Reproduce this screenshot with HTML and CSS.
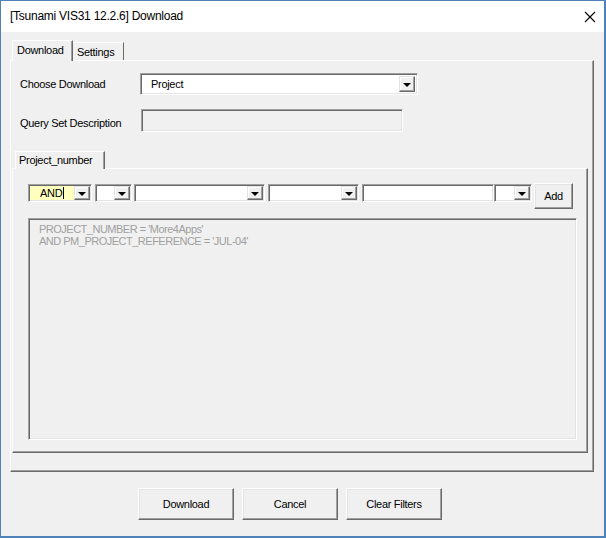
FILE: index.html
```html
<!DOCTYPE html>
<html>
<head>
<meta charset="utf-8">
<link rel="stylesheet" href="styles.css">
</head>
<body>
<div class="window">
  <div class="titlebar">
    <span class="title">[Tsunami VIS31 12.2.6] Download</span>
    <svg class="close" width="12" height="12" viewBox="0 0 12 12"><path d="M1 1 L11 11 M11 1 L1 11" stroke="#000" stroke-width="1.1" fill="none"/></svg>
  </div>
  <div class="client">
    <div class="tabs">
      <div class="tab active">Download</div>
      <div class="tab">Settings</div>
    </div>
    <div class="page">
      <div class="field-row first">
        <span class="label">Choose Download</span>
        <div class="combo choose"><span class="val">Project</span><span class="dd"><i></i></span></div>
      </div>
      <div class="field-row second">
        <span class="label low">Query Set Description</span>
        <div class="edit desc"></div>
      </div>
      <div class="subtabs">
        <div class="subtab">Project_number</div>
      </div>
      <div class="subpage">
        <div class="filter-row">
          <div class="combo c1 yellow"><span class="val">AND<b class="caret"></b></span><span class="dd"><i></i></span></div>
          <div class="combo c2"><span class="val"></span><span class="dd"><i></i></span></div>
          <div class="combo c3"><span class="val"></span><span class="dd"><i></i></span></div>
          <div class="combo c4"><span class="val"></span><span class="dd"><i></i></span></div>
          <div class="edit c5"></div>
          <div class="combo c6"><span class="val"></span><span class="dd"><i></i></span></div>
          <div class="btn add">Add</div>
        </div>
        <div class="memo">
          <div>PROJECT_NUMBER = 'More4Apps'</div>
          <div>AND PM_PROJECT_REFERENCE = 'JUL-04'</div>
        </div>
      </div>
    </div>
    <div class="buttons">
      <div class="btn big">Download</div>
      <div class="btn big">Cancel</div>
      <div class="btn big">Clear Filters</div>
    </div>
  </div>
</div>
</body>
</html>
```
FILE: styles.css
```css
* { box-sizing: border-box; }
html, body { margin: 0; padding: 0; }
body {
  width: 606px;
  height: 538px;
  overflow: hidden;
  font-family: "Liberation Sans", Arial, sans-serif;
  font-size: 11px;
  letter-spacing: -0.3px;
  color: #000;
}
.window {
  width: 606px;
  height: 538px;
  border-left: 1px solid #4f82b8;
  border-top: 1px solid #4f82b8;
  border-right: 2px solid #4f82b8;
  border-bottom: 2px solid #4f82b8;
  display: flex;
  flex-direction: column;
  background: #f0f0f0;
}
.titlebar {
  height: 31px;
  background: #fff;
  display: flex;
  align-items: center;
  justify-content: space-between;
  padding: 0 8px 1px 9px;
}
.title {
  font-size: 12px;
  letter-spacing: -0.25px;
}
.close { display: block; margin-top: 1px; }
.client {
  flex: 1;
  padding: 0 10px 0 9px;
  background: #f0f0f0;
}
.tabs {
  display: flex;
  align-items: flex-end;
  margin-top: 8px;
  margin-left: 2px;
  height: 21px;
  margin-bottom: -1px;
  position: relative;
  z-index: 1;
}
.tab {
  height: 18px;
  margin-bottom: 1px;
  padding: 0 6px 0 4px;
  display: flex;
  align-items: center;
  border-top: 1px solid #fff;
  border-left: 1px solid #fff;
  border-right: 1px solid #696969;
  background: #f0f0f0;
}
.tab.active {
  height: 21px;
  margin-bottom: 0;
  width: 61px;
  padding: 0 0 2px 4px;
  box-shadow: inset -1px 0 #a0a0a0;
}
.tab:not(.active) { width: 51px; padding-left: 4px; border-left: none; }
.page {
  height: 412px;
  border-top: 1px solid #fff;
  border-left: 1px solid #fff;
  border-right: 1px solid #696969;
  border-bottom: 1px solid #696969;
  box-shadow: inset -1px -1px #a0a0a0;
}
.field-row {
  display: flex;
  align-items: center;
  margin-left: 9px;
}
.field-row.first { margin-top: 12px; }
.field-row.second { margin-top: 14px; }
.label { width: 120px; }
.label.low { padding-top: 5px; }
.combo {
  display: flex;
  background: #fff;
  border: 1px solid;
  border-color: #a0a0a0 #fff #fff #a0a0a0;
  box-shadow: inset 1px 1px #696969, inset -1px -1px #e3e3e3;
  padding: 2px;
}
.combo .val {
  flex: 1;
  display: flex;
  align-items: center;
  padding-left: 8px;
}
.dd {
  width: 16px;
  background: #f0f0f0;
  border: 1px solid;
  border-color: #e3e3e3 #696969 #696969 #e3e3e3;
  box-shadow: inset -1px -1px #a0a0a0, inset 1px 1px #fff;
  display: flex;
  align-items: center;
  justify-content: center;
}
.dd i {
  width: 0; height: 0;
  border-left: 4px solid transparent;
  border-right: 4px solid transparent;
  border-top: 4px solid #000;
  margin-top: 1px;
}
.choose { width: 278px; height: 22px; }
.edit {
  border: 1px solid;
  border-color: #a0a0a0 #fff #fff #a0a0a0;
  box-shadow: inset 1px 1px #696969, inset -1px -1px #e3e3e3;
  background: #fff;
}
.desc { width: 262px; height: 23px; margin-left: 1px; background: #f0f0f0; }
.subtabs {
  display: flex;
  margin-top: 19px;
  margin-left: 4px;
  height: 18px;
  margin-bottom: -1px;
  position: relative;
  z-index: 1;
}
.subtab {
  width: 90px;
  height: 18px;
  padding: 0 0 2px 3px;
  display: flex;
  align-items: center;
  background: #f0f0f0;
  border-top: 1px solid #fff;
  border-left: 1px solid #fff;
  border-right: 1px solid #696969;
  box-shadow: inset -1px 0 #a0a0a0;
}
.subpage {
  margin-left: 1px;
  margin-right: 5px;
  height: 285px;
  border-top: 1px solid #fff;
  border-left: 1px solid #fff;
  border-right: 1px solid #696969;
  border-bottom: 1px solid #696969;
  box-shadow: inset -1px -1px #a0a0a0;
  padding: 14px 0 0 15px;
}
.filter-row {
  display: flex;
  align-items: flex-start;
  height: 26px;
}
.filter-row .combo, .filter-row .edit { height: 18px; margin-top: 1px; padding: 1px; }
.filter-row .dd { width: 16px; }
.c1 { width: 64px; }
.c1 .val { background: #ffffc0; padding-left: 10px; }
.caret { display: inline-block; width: 1px; height: 12px; background: #000; margin-left: 1px; }
.c2 { width: 37px; margin-left: 3px; }
.c3 { width: 131px; margin-left: 2px; }
.c4 { width: 91px; margin-left: 3px; }
.c5 { width: 132px; margin-left: 3px; }
.c6 { width: 38px; }
.btn {
  display: flex;
  align-items: center;
  justify-content: center;
  background: #f0f0f0;
  border: 1px solid;
  border-color: #fff #696969 #696969 #fff;
  box-shadow: inset -1px -1px #a0a0a0, inset 1px 1px #e3e3e3;
}
.add { width: 39px; height: 26px; margin-left: 2px; }
.memo {
  margin-top: 9px;
  width: 549px;
  height: 222px;
  border: 1px solid;
  border-color: #a0a0a0 #fff #fff #a0a0a0;
  box-shadow: inset 1px 1px #696969, inset -1px -1px #e3e3e3;
  padding: 4px 0 0 10px;
  color: #a0a0a0;
  line-height: 12px;
  letter-spacing: -0.5px;
}
.buttons {
  display: flex;
  gap: 8px;
  margin-top: 16px;
  padding-left: 128px;
}
.big { width: 96px; height: 32px; }
```
